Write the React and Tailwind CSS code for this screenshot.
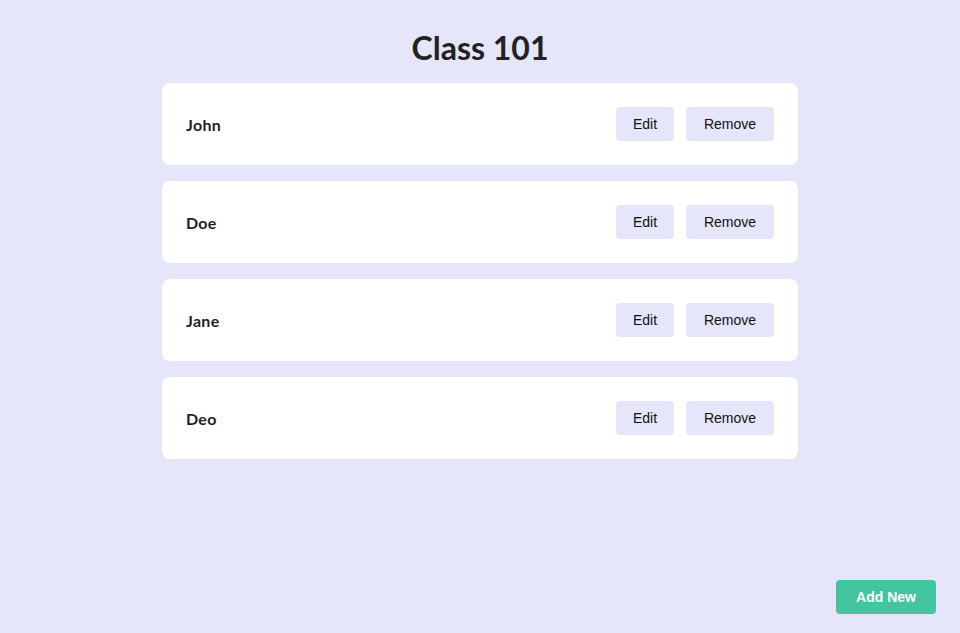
export default function App() {
  const names = ["John", "Doe", "Jane", "Deo"];
  return (
    <div className="min-h-[633px] bg-[#e6e6fa] pt-[29px]" style={{ fontFamily: "Lato, 'Noto Sans', sans-serif" }}>
      <h1 className="text-center text-[32px] leading-[38px] font-bold text-[#222]">Class 101</h1>
      <div className="mx-auto mt-[16px] flex w-[636px] flex-col gap-4">
        {names.map((n) => (
          <div key={n} className="flex h-[82px] items-center justify-between rounded-lg bg-white px-6">
            <span className="pt-[2px] text-base font-bold tracking-[0.3px] text-[#1f1f1f]">{n}</span>
            <div className="flex gap-3" style={{ fontFamily: "'Liberation Sans', Arial, sans-serif" }}>
              <button className="h-[34px] w-[58px] rounded bg-[#e6e6fa] text-sm text-[#111]">Edit</button>
              <button className="h-[34px] w-[88px] rounded bg-[#e6e6fa] text-sm text-[#111]">Remove</button>
            </div>
          </div>
        ))}
      </div>
      <button
        className="fixed right-[24px] bottom-[19px] h-[34px] w-[100px] rounded bg-[#43c59e] text-sm font-semibold text-white"
        style={{ fontFamily: "'Liberation Sans', Arial, sans-serif" }}
      >
        Add New
      </button>
    </div>
  );
}
